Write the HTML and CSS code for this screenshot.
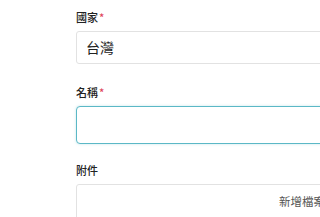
FILE: index.html
```html
<!DOCTYPE html>
<html lang="zh-Hant">
<head>
<meta charset="utf-8">
<link rel="stylesheet" href="styles.css">
</head>
<body>
<form class="form">
  <div class="field">
    <label class="label">國家<span class="req">*</span></label>
    <div class="input">台灣</div>
  </div>
  <div class="field">
    <label class="label">名稱<span class="req">*</span></label>
    <div class="input focus"></div>
  </div>
  <div class="field">
    <label class="label">附件</label>
    <div class="attach"><span class="add">新增檔案</span></div>
  </div>
</form>
</body>
</html>
```
FILE: styles.css
```css
html, body {
  margin: 0;
  padding: 0;
  background: #ffffff;
  overflow: hidden;
  width: 320px;
  height: 217px;
}
body {
  font-family: "Noto Sans CJK TC", "Noto Sans", sans-serif;
  color: #333333;
}
.form {
  display: flex;
  flex-direction: column;
  gap: 18px;
  padding: 9px 0 0 76px;
  width: 264px;
}
.field {
  display: flex;
  flex-direction: column;
  gap: 6px;
}
.field:first-child {
  margin-bottom: 2px;
}
.label {
  font-size: 11px;
  line-height: 16px;
  color: #222222;
  font-weight: 500;
}
.req {
  color: #e0445a;
  margin-left: 1px;
}
.input {
  box-sizing: border-box;
  height: 33px;
  border: 1px solid #e2e2e2;
  border-radius: 3px;
  padding: 0 9px;
  font-size: 14px;
  line-height: 31px;
  color: #222222;
  background: #ffffff;
}
.input.focus {
  height: 38px;
  border-color: #5bb8c6;
  box-shadow: 0 0 3px rgba(91, 184, 198, 0.35);
  border-radius: 4px;
}
.attach {
  box-sizing: border-box;
  height: 60px;
  border: 1px solid #e2e2e2;
  border-radius: 3px;
  display: flex;
  justify-content: flex-end;
  padding: 8px 14px 0 0;
}
.add {
  font-size: 11.5px;
  line-height: 16px;
  color: #555555;
}
```
